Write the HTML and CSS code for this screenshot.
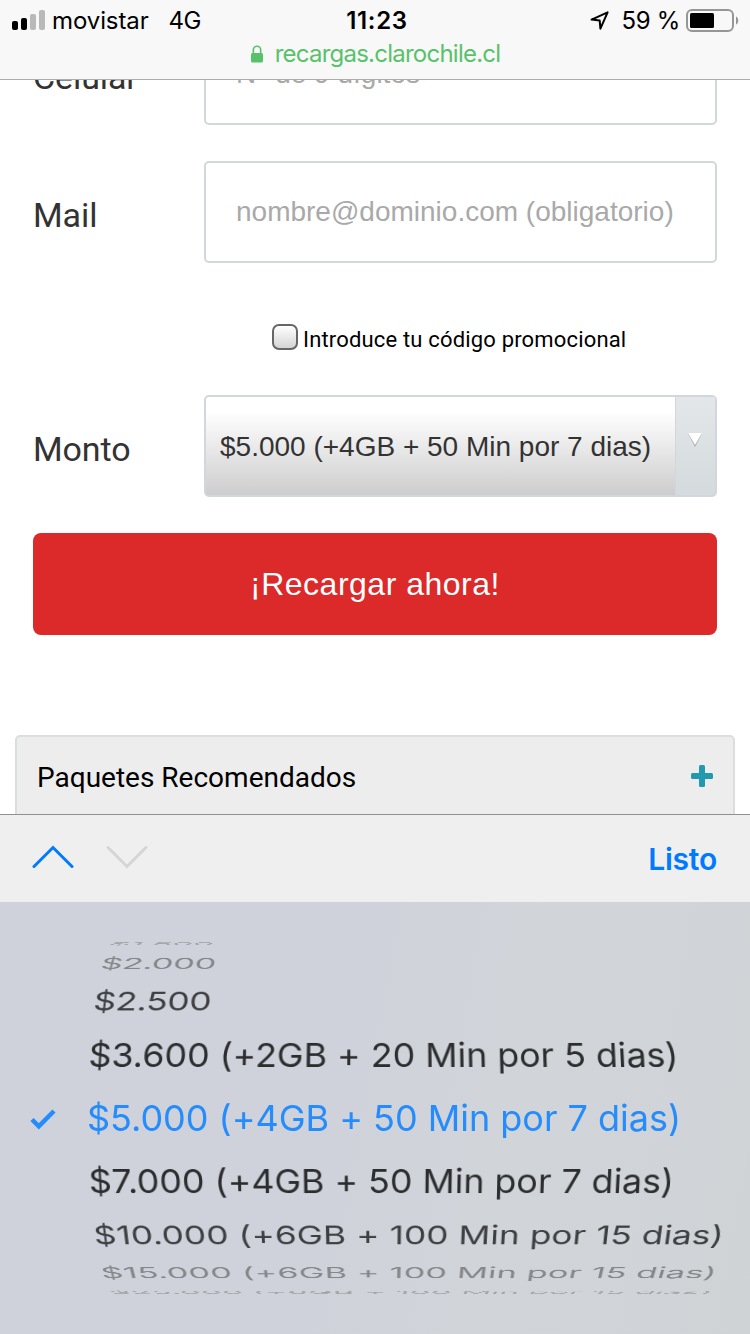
FILE: index.html
```html
<!DOCTYPE html>
<html lang="es">
<head>
<meta charset="utf-8">
<title>Recargas Claro Chile</title>
<link rel="stylesheet" href="styles.css">
</head>
<body>
<div class="phone">
  <header class="chrome">
    <div class="status">
      <div class="status-left">
        <svg class="signal" width="34" height="22" viewBox="0 0 34 22"><rect x="0" y="11" width="6" height="9" rx="2"/><rect x="9" y="8" width="6" height="12" rx="2"/><rect class="dim" x="18" y="4" width="6" height="16" rx="2"/><rect class="dim" x="27" y="0" width="6" height="20" rx="2"/></svg>
        <span class="carrier">movistar</span>
        <span class="network">4G</span>
      </div>
      <div class="clock">11:23</div>
      <div class="status-right">
        <svg class="locate" width="20" height="20" viewBox="0 0 20 20"><path d="M1.6 8.6 17.6 1.3 10.4 17.6 9.7 9.6Z"/></svg>
        <span class="percent">59 %</span>
        <svg class="battery" width="54" height="24" viewBox="0 0 54 24"><rect class="case" x="1" y="1" width="46" height="21" rx="5"/><rect x="4" y="4" width="24" height="15" rx="1.5"/><path class="tip" d="M50 7.5c3 1 3 7 0 8z"/></svg>
      </div>
    </div>
    <div class="address">
      <svg class="lock" width="14" height="18" viewBox="0 0 14 18"><rect x="1" y="8" width="12" height="9.5" rx="1.5"/><path d="M3.3 9V5.2a3.7 4 0 0 1 7.4 0V9"/></svg>
      <span class="host">recargas.clarochile.cl</span>
    </div>
  </header>

  <main class="page">
    <div class="field first"><label class="label">Celular</label><div class="input"><span class="hint hint-phone">N° de 9 dígitos</span></div></div>
    <div class="field"><label class="label">Mail</label><div class="input"><span class="hint hint-mail">nombre@dominio.com (obligatorio)</span></div></div>
    <div class="promo"><span class="checkbox"></span><span class="promo-text">Introduce tu código promocional</span></div>
    <div class="field"><label class="label">Monto</label>
      <div class="select"><span class="select-value">$5.000 (+4GB + 50 Min por 7 dias)</span>
        <span class="select-arrow"><svg width="16" height="16" viewBox="0 0 16 16"><path class="shade" d="M1 1.5H15L8 15Z"/><path class="tri" d="M1 1H15L8 13Z"/></svg></span></div>
    </div>
    <div class="submit"><span class="submit-text">¡Recargar ahora!</span></div>
    <div class="accordion"><span class="accordion-title">Paquetes Recomendados</span>
      <svg width="22" height="22" viewBox="0 0 22 22"><rect x="0" y="8" width="22" height="6" rx="1.5"/><rect x="8" y="0" width="6" height="22" rx="1.5"/></svg></div>
  </main>

  <div class="toolbar">
    <svg class="arrows" width="118" height="28" viewBox="0 0 118 28"><path class="up" d="M2 24.5 21 5.5 40 24.5"/><path class="down" d="M76 5.5 95 24.5 114 5.5"/></svg>
    <span class="done">Listo</span>
  </div>

  <div class="picker">
    <div class="wheel">
      <div class="row far short r-up4">$1.500</div>
      <div class="row dimmed short r-up3">$2.000</div>
      <div class="row mid short r-up2">$2.500</div>
      <div class="row r-up1">$3.600 (+2GB + 20 Min por 5 dias)</div>
      <div class="row selected"><svg class="check" width="26" height="22" viewBox="0 0 26 22"><path d="M2 11.5 8.8 18.3 24 3"/></svg>$5.000 (+4GB + 50 Min por 7 dias)</div>
      <div class="row r-down1">$7.000 (+4GB + 50 Min por 7 dias)</div>
      <div class="row mid r-down2">$10.000 (+6GB + 100 Min por 15 dias)</div>
      <div class="row dimmed r-down3">$15.000 (+6GB + 100 Min por 15 dias)</div>
      <div class="row far r-down4">$25.000 (+6GB + 100 Min por 15 dias)</div>
    </div>
  </div>
</div>
</body>
</html>
```
FILE: styles.css
```css
* { box-sizing: border-box; }
body { margin: 0; background: #fff; }
svg { display: block; flex: none; }
.phone { width: 750px; height: 1334px; display: flex; flex-direction: column; overflow: hidden; font-family: Inter, "Liberation Sans", sans-serif; }

/* Browser chrome */
.chrome { height: 80px; flex: none; background: #f8f8f8; border-bottom: 1px solid #acacac; }
.status { height: 40px; display: grid; grid-template-columns: 1fr auto 1fr; align-items: center; padding: 2px 10px 0 12px; font-size: 24px; line-height: 38px; color: #000; }
.status-left { display: flex; align-items: center; }
.signal .dim { fill: #b9b9b9; }
.carrier { margin-left: 6px; letter-spacing: -0.1px; }
.network { margin-left: 20px; letter-spacing: -0.5px; }
.clock { font-weight: 600; letter-spacing: 0.7px; padding-left: 2px; }
.status-right { display: flex; align-items: center; justify-content: flex-end; }
.locate path { fill: none; stroke: #000; stroke-width: 2; stroke-linejoin: round; }
.percent { margin: 0 6px 0 11px; letter-spacing: -0.3px; }
.battery .case { fill: none; stroke: #969696; stroke-width: 2; }
.battery .tip { fill: #969696; }
.address { display: flex; align-items: center; justify-content: center; height: 28px; color: #58c26b; font-size: 24px; line-height: 28px; letter-spacing: -0.76px; }
.lock { margin-right: 11px; fill: #58c26b; }
.lock path { fill: none; stroke: #58c26b; stroke-width: 1.6; }

/* Form */
.page { height: 734px; flex: none; overflow: hidden; background: #fff; }
.field { display: flex; height: 102px; margin: 0 33px 36px; }
.field.first { margin-top: -57px; }
.label { width: 171px; font: 34px/108px Roboto, sans-serif; letter-spacing: -0.1px; color: #333; }
.input { flex: 1; border: 2px solid #d1d7db; border-radius: 5px; background: #fff; padding-left: 30px; }
.hint { font: 28px/98px "Liberation Sans", sans-serif; color: #a9a9a9; white-space: nowrap; }
.promo { display: flex; align-items: center; height: 60px; margin: 46px 0 26px 272px; }
.checkbox { width: 26px; height: 26px; border: 2px solid #666; border-radius: 7px; background: linear-gradient(#fff, #d4d4d4); margin-bottom: 4px; }
.promo-text { margin-left: 5px; padding-top: 2px; font: 22px/30px Roboto, sans-serif; letter-spacing: 0.17px; color: #000; }
.select { flex: 1; display: flex; border: 2px solid #d1d7db; border-radius: 5px; overflow: hidden; background: linear-gradient(#fff 0%, #fff 14%, #cdcdcd 100%); }
.select-value { flex: 1; padding-left: 14px; font: 28px/99px "Liberation Sans", sans-serif; color: #333; white-space: nowrap; }
.select-arrow { width: 40px; padding: 35px 0 0 11px; border-left: 1px solid #d1d7db; background: linear-gradient(#e3e7e9, #d4dadd); }
.select-arrow .shade { fill: #aaa; }
.select-arrow .tri { fill: #fff; }
.submit { height: 102px; margin: 0 33px; border-radius: 8px; background: #dc2929; color: #fff; text-align: center; }
.submit-text { font: 32px/102px "Liberation Sans", sans-serif; letter-spacing: 0.5px; }
.accordion { display: flex; align-items: center; justify-content: space-between; height: 84px; margin: 100px 15px 0; padding: 0 20px; border: 2px solid #dcdddd; border-radius: 5px; background: #ededed; }
.accordion-title { padding-top: 2px; font: 28px/80px Roboto, sans-serif; color: #000; }
.accordion svg { fill: #2299ae; margin-bottom: 2px; }

/* Keyboard accessory bar */
.toolbar { display: flex; align-items: center; justify-content: space-between; height: 88px; flex: none; padding: 0 33px 0 32px; border-top: 1px solid #919191; background: #efefef; }
.arrows { margin-bottom: 5px; }
.arrows path { fill: none; stroke-width: 3; stroke-linecap: round; stroke-linejoin: miter; }
.arrows .up { stroke: #007aff; }
.arrows .down { stroke: #d5d5d5; }
.done { font-size: 30px; font-weight: 600; letter-spacing: -0.2px; color: #007aff; padding-top: 1px; }

/* Cylindrical picker */
.picker { height: 432px; flex: none; padding-top: 39px; background: linear-gradient(100deg, #cfd2db 0%, #cfd2da 45%, #d1d4d9 65%, #d0d3d6 100%); }
.wheel { display: grid; height: 353px; align-items: center; overflow: hidden; perspective: 1750px; perspective-origin: 375px 177px; }
.row { grid-area: 1 / 1; height: 64px; padding-left: 87px; font-size: 36px; line-height: 65px; letter-spacing: -0.02px; color: #2b2d2f; white-space: nowrap; }
.mid { color: #3d3f42; letter-spacing: 0.12px; }
.dimmed { color: #85878b; letter-spacing: 0.2px; }
.far { color: #a4a6aa; letter-spacing: 0.2px; }
.short { letter-spacing: -0.3px; }
.selected { display: flex; padding-left: 30px; color: #258cfb; }
.check { width: 26px; margin: 22px 31px 0 0; }
.check path { fill: none; stroke: #258cfb; stroke-width: 4.5; }
.r-up1 { transform: translateZ(-192px) rotateX(19.3deg) translateZ(192px); }
.r-up2 { transform: translateZ(-192px) rotateX(38.6deg) translateZ(192px); }
.r-up3 { transform: translateZ(-192px) rotateX(57.9deg) translateZ(192px); }
.r-up4 { transform: translateZ(-192px) rotateX(77.2deg) translateZ(194px); }
.r-down1 { transform: translateZ(-192px) rotateX(-19.3deg) translateZ(192px); }
.r-down2 { transform: translateZ(-192px) rotateX(-38.6deg) translateZ(192px); }
.r-down3 { transform: translateZ(-192px) rotateX(-57.9deg) translateZ(192px); }
.r-down4 { transform: translateZ(-192px) rotateX(-77.2deg) translateZ(194px); }
```
